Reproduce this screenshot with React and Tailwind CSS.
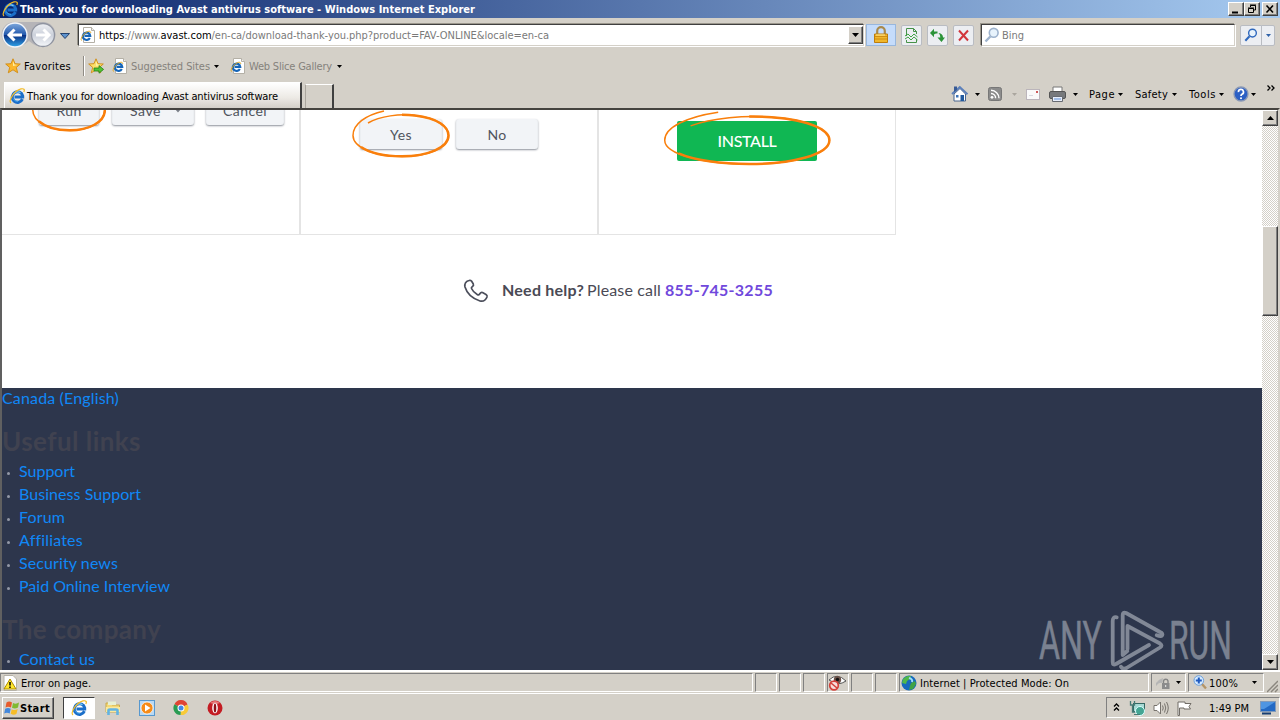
import React, { useLayoutEffect, useRef } from "react";

const UI = "pt-[2px] font-['DejaVu_Sans_Condensed','DejaVu_Sans',sans-serif] text-[11px] leading-[14px]";
const WEB = "font-[Lato,'Open_Sans',sans-serif]";

/* A single-line label whose tracking is spread so that it fills the given width. */
function Label({ w, className = "", children }) {
  const ref = useRef(null);
  useLayoutEffect(() => {
    const el = ref.current;
    el.style.letterSpacing = "0px";
    const natural = el.getBoundingClientRect().width;
    el.style.letterSpacing = (w - natural) / el.textContent.length + "px";
  }, [w]);
  return (
    <span className={"flex shrink-0 " + className} style={{ width: w }}>
      <span ref={ref} className="block shrink-0 whitespace-nowrap">{children}</span>
    </span>
  );
}

function IE({ size = 16, className = "" }) {
  return (
    <svg width={size} height={size} viewBox="0 0 16 16" className={"shrink-0 " + className}>
      <path d="M13.400 11.200A5.300 5.300 0 1 1 13.700 7.800V9H5.500" fill="none" stroke="#1c6fc9" strokeWidth="3" />
      <path d="M4.300 6.300A5 5 0 0 1 11.500 4.800" fill="none" stroke="#7dccf7" strokeWidth="1.100" />
      <path d="M4 10.500Q5.500 13.500 9 13.400" fill="none" stroke="#4aa9ec" strokeWidth="1" />
      <path d="M2 15C-1 12.500 5.500 2.500 12 .9C15.500 .2 15.800 2 14.800 4" fill="none" stroke="#f3bb25" strokeWidth="1.200" />
    </svg>
  );
}

function PageIE({ className = "" }) {
  return (
    <svg width="16" height="16" viewBox="0 0 16 16" className={"shrink-0 " + className}>
      <path d="M3.500 .5H11.500L14.500 3.500V15.500H3.500Z" fill="#fff" stroke="#b4b0a6" />
      <path d="M11.500 .5V3.500H14.500" fill="#eee" stroke="#b4b0a6" />
      <path d="M9.800 11A3.700 3.700 0 1 1 10.200 8.900H4.500" fill="none" stroke="#1766b8" strokeWidth="2.200" />
      <path d="M1.500 13.500C-.2 11.500 4.500 5.300 8.600 4.300C10.300 4 11 5.200 10.600 6" fill="none" stroke="#e5a71b" strokeWidth="1" />
    </svg>
  );
}

function Caret({ className = "fill-black" }) {
  return (
    <svg width="5" height="3" viewBox="0 0 5 3" className={"shrink-0 " + className}>
      <path d="M0 0H5L2.500 3Z" />
    </svg>
  );
}

function Star({ add }) {
  return (
    <svg width="16" height="16" viewBox="0 0 16 16" className="shrink-0">
      <path d="M8 .8L10 5.700L15.300 6L11.300 9.400L12.700 14.800L8 11.800L3.300 14.800L4.700 9.400L.7 6L6 5.700Z" fill={add ? "#fbe06a" : "#fcb72b"} stroke="#cf8a13" strokeWidth=".9" />
      <path d="M8 3L9.300 6.500L12.500 7L8 8Z" fill="#fff1a8" />
      {add && <path d="M6 10H11V7.600L15.600 11.400L11 15.200V13H6Z" fill="#52c234" stroke="#278016" strokeWidth=".8" />}
    </svg>
  );
}

function Magnifier({ color, size = 16, fill = "#e8f3fc" }) {
  return (
    <svg width={size} height={size} viewBox="0 0 16 16" className="shrink-0">
      <path d="M1.500 14.500L6.300 9.500" stroke={color} strokeWidth="2.400" />
      <circle cx="9.700" cy="5.800" r="4.400" fill={fill} stroke={color} strokeWidth="1.600" />
    </svg>
  );
}

const RAISED = "border border-t-white border-l-white border-r-[#404040] border-b-[#404040] bg-[#d4d0c8] shadow-[inset_-1px_-1px_0_#808080]";

function TitleBar() {
  return (
    <div className="flex h-[18px] items-center bg-[linear-gradient(90deg,#0a246a,#a6caf0)] pl-[2px] pr-[2px]">
      <IE className="mr-[2px]" />
      <Label w={455} className={UI + " font-bold text-white"}>Thank you for downloading Avast antivirus software - Windows Internet Explorer</Label>
      <div className="ml-auto flex">
        <div className={"flex h-[14px] w-[16px] items-center justify-center " + RAISED}>
          <svg width="12" height="10"><path d="M2 8.500H8" stroke="#000" strokeWidth="2" /></svg>
        </div>
        <div className={"flex h-[14px] w-[16px] items-center justify-center " + RAISED}>
          <svg width="12" height="10" fill="none" stroke="#000"><path d="M4.500 3V1.500H9.500V6H8M4 1H10M2.500 4.500H7.500V8.500H2.500ZM2 4H8" /></svg>
        </div>
        <div className={"ml-[2px] flex h-[14px] w-[16px] items-center justify-center " + RAISED}>
          <svg width="12" height="10"><path d="M2.500 1.500L9 8.500M9 1.500L2.500 8.500" stroke="#000" strokeWidth="1.600" /></svg>
        </div>
      </div>
    </div>
  );
}

const FIELD = "flex h-[22px] items-center border border-t-[#404040] border-l-[#404040] border-r-[#d4d0c8] border-b-[#d4d0c8] bg-white shadow-[-1px_-1px_0_#9a968c,1px_1px_0_#fff]";
const TOOL = "flex h-[21px] items-center justify-center rounded-[2px] border border-[#b9bcc2] bg-[#eceef2]";

function NavButtons() {
  return (
    <svg width="72" height="28" viewBox="0 0 72 28" className="shrink-0">
      <defs>
        <linearGradient id="navBlue" x2="0" y2="1"><stop stopColor="#7fa9dd" /><stop offset=".48" stopColor="#245aae" /><stop offset=".52" stopColor="#0b3285" /><stop offset="1" stopColor="#2fa3e8" /></linearGradient>
        <linearGradient id="navGrey" x2="0" y2="1"><stop stopColor="#eef0f4" /><stop offset=".5" stopColor="#ccd1db" /><stop offset="1" stopColor="#f5f7fa" /></linearGradient>
      </defs>
      <path d="M14 1H43A12.500 12.500 0 0 1 43 26Q36 26 29 20Q22 26 14 26A12.500 12.500 0 0 1 14 1Z" fill="#b5b4b8" />
      <circle cx="15" cy="14" r="12" fill="url(#navBlue)" stroke="#f2f4f8" strokeWidth="1.400" />
      <circle cx="43" cy="14" r="11.500" fill="url(#navGrey)" stroke="#8f94a0" strokeWidth="1.300" />
      <path d="M22 14H9.500M14.500 8.500L9 14L14.500 19.500" fill="none" stroke="#fff" strokeWidth="3" />
      <path d="M36 14H48.500M43.500 8.500L49 14L43.500 19.500" fill="none" stroke="#fff" strokeWidth="3" />
      <path d="M60.500 12.500H69.500L65 17.500Z" fill="#5d93cf" stroke="#25436e" />
    </svg>
  );
}

function AddressRow() {
  return (
    <div className="flex h-[34px] items-center">
      <NavButtons />
      <div className={FIELD + " ml-[6px] w-[786px] pl-px"}>
        <PageIE />
        <Label w={450} className={UI + " ml-[3px] text-[#7a7a7a]"}>
          <span className="text-black">https</span>://www.<span className="text-black">avast.com</span>/en-ca/download-thank-you.php?product=FAV-ONLINE&amp;locale=en-ca
        </Label>
        <div className={"ml-auto flex h-[18px] w-[15px] items-center justify-center " + RAISED}>
          <svg width="7" height="4"><path d="M0 0H7L3.500 4Z" /></svg>
        </div>
      </div>
      <div className="ml-[2px] flex h-[22px] w-[30px] items-center justify-center border border-[#98b7dd] bg-[#c5dcfb]">
        <svg width="16" height="18" viewBox="0 0 16 18">
          <path d="M4.200 8V5A3.700 3.700 0 0 1 11.800 5V8" fill="none" stroke="#a98a4c" strokeWidth="2.200" />
          <path d="M1.500 8H14.500V16.500H1.500Z" fill="#f0b72b" stroke="#bd7d0c" />
          <path d="M2 10.500H14M2 13H14" stroke="#cf8c12" />
          <path d="M3 9H12" stroke="#ffe893" />
        </svg>
      </div>
      <div className={TOOL + " ml-[5px] w-[21px]"}>
        <svg width="15" height="17" viewBox="0 0 15 17" fill="none" stroke="#469248">
          <path d="M2.500 9V1.500H9.500L12.500 4.500V7M9.500 1.500V4.500H12.500M2.500 13V15.500H12.500V12" />
          <path d="M1 9L4 7L7 10L10 7L13.500 10M1 12L4 10L7 13L10 10L13.500 13" stroke="#3fa345" />
        </svg>
      </div>
      <div className={TOOL + " ml-[5px] w-[21px]"}>
        <svg width="17" height="15" viewBox="0 0 17 15" fill="#2b9338">
          <path d="M1 5L5 .8V3.500H8.500V5.500Q6.500 5 5 6.500V9.200Z" />
          <path d="M8.500 9.500L12.500 14L16 9.500H14Q14 5.500 9.500 5Q11.500 6.500 11.300 9.500Z" />
        </svg>
      </div>
      <div className={TOOL + " ml-[5px] w-[21px]"}>
        <svg width="13" height="13" viewBox="0 0 13 13"><path d="M2 1.500L11 11.500M11 1.500L2 11.500" stroke="#d2353b" strokeWidth="2" /></svg>
      </div>
      <div className={FIELD + " ml-[7px] w-[254px] pl-[2px]"}>
        <Magnifier color="#9eb3cd" />
        <Label w={22} className={UI + " ml-[2px] text-[#7a7a7a]"}>Bing</Label>
      </div>
      <div className={TOOL + " ml-[5px] w-[22px] rounded-r-none"}><Magnifier color="#2f68bd" size={14} /></div>
      <div className={TOOL + " -ml-px w-[14px] rounded-l-none"}><Caret className="fill-[#2f62a8]" /></div>
    </div>
  );
}

function FavoritesRow() {
  return (
    <div className="flex h-[30px] items-center pb-[2px] pl-[5px]">
      <Star />
      <Label w={47} className={UI + " ml-[3px]"}>Favorites</Label>
      <div className="ml-[12px] h-[20px] w-[2px] border-l border-r border-l-[#8f8b84] border-r-white" />
      <div className="ml-[3px] flex"><Star add /></div>
      <div className="ml-[8px] flex"><PageIE /></div>
      <Label w={79} className={UI + " ml-[3px] text-[#85827c]"}>Suggested Sites</Label>
      <div className="ml-[4px] flex"><Caret /></div>
      <div className="ml-[11px] flex"><PageIE /></div>
      <Label w={83} className={UI + " ml-[3px] text-[#85827c]"}>Web Slice Gallery</Label>
      <div className="ml-[5px] flex"><Caret /></div>
    </div>
  );
}

function TabRow() {
  return (
    <div className="flex h-[26px] pl-[4px]">
      <div className="flex w-[298px] items-center border-l border-t border-r-2 border-l-white border-t-white border-r-[#404040] bg-[linear-gradient(180deg,#fff,#ece9e4_60%,#d4d0c8)] pl-[4px]">
        <IE />
        <Label w={251} className={UI + " ml-[2px]"}>Thank you for downloading Avast antivirus software</Label>
      </div>
      <div className="ml-[3px] mt-[2px] w-[29px] border-l border-t border-r-2 border-l-[#aaa69e] border-t-white border-r-[#404040]" />
      <div className="ml-auto flex h-[24px] w-[329px] items-center">
        <svg width="18" height="18" viewBox="0 0 18 18" className="shrink-0">
          <path d="M3 9V16H14.500V9L9 3.500Z" fill="#fff" stroke="#49648d" />
          <path d="M1 9L8.800 2L16.500 9.200" fill="none" stroke="#5c80bb" strokeWidth="2" />
          <path d="M3 1.500H6V5L3 7Z" fill="#385b96" />
          <path d="M9.500 10H13V16H9.500Z" fill="#20599e" /><path d="M5 10H7.500V12.500H5Z" fill="#3c73b7" />
        </svg>
        <div className="ml-[6px] flex"><Caret /></div>
        <svg width="14" height="14" viewBox="0 0 14 14" className="ml-[8px] shrink-0">
          <rect x=".5" y=".5" width="13" height="13" rx="2" fill="#8c8c8c" stroke="#777" />
          <circle cx="4" cy="10.300" r="1.400" fill="#fff" />
          <path d="M3 6.500A4.500 4.500 0 0 1 7.600 11.300M3 3.300A8 8 0 0 1 11 11.300" fill="none" stroke="#fff" strokeWidth="1.400" />
        </svg>
        <div className="ml-[10px] flex"><Caret className="fill-[#aaa69e]" /></div>
        <svg width="14" height="11" viewBox="0 0 14 11" className="ml-[9px] shrink-0">
          <rect x=".5" y=".5" width="13" height="10" fill="#fafafa" stroke="#bbb5bb" />
          <rect x="10" y="2" width="2" height="2" fill="#cf5a5a" /><path d="M3 6.500H7" stroke="#d9d9e0" />
        </svg>
        <svg width="17" height="16" viewBox="0 0 17 16" className="ml-[9px] shrink-0">
          <path d="M4 1H13V7H4Z" fill="#fff" stroke="#777" />
          <rect x=".5" y="5.500" width="16" height="7" rx="1.500" fill="#77797c" stroke="#555" />
          <path d="M3.500 10.500H13.500V15.500H3.500Z" fill="#e8eefa" stroke="#676b72" /><path d="M5 13H12" stroke="#6091d8" />
        </svg>
        <div className="ml-[7px] flex"><Caret /></div>
        <Label w={26} className={UI + " ml-[11px]"}>Page</Label>
        <div className="ml-[3px] flex"><Caret /></div>
        <Label w={33} className={UI + " ml-[12px]"}>Safety</Label>
        <div className="ml-[4px] flex"><Caret /></div>
        <Label w={27} className={UI + " ml-[12px]"}>Tools</Label>
        <div className="ml-[3px] flex"><Caret /></div>
        <svg width="16" height="16" viewBox="0 0 16 16" className="ml-[9px] shrink-0">
          <circle cx="8" cy="8" r="7" fill="#2b5fc4" stroke="#8a98b5" strokeWidth="1.300" />
          <path d="M5.500 6.200A2.500 2.500 0 1 1 8.900 8.200Q8 8.700 8 10" fill="none" stroke="#fff" strokeWidth="1.700" /><circle cx="8" cy="12.200" r="1" fill="#fff" />
        </svg>
        <div className="ml-[2px] flex"><Caret /></div>
        <svg width="8" height="6" viewBox="0 0 8 6" className="mb-[13px] ml-[11px] shrink-0"><path d="M.5 .5L3 3L.5 5.500M4.500 .5L7 3L4.500 5.500" fill="none" stroke="#000" strokeWidth="1.300" /></svg>
      </div>
    </div>
  );
}

const SOFT = "flex items-center justify-center rounded-[3px] border-x border-[#eceff2] bg-[#f2f4f7] shadow-[0_1px_2px_#8d929b] text-[#50555e] " + WEB;

function Scribble({ w, h, className }) {
  return (
    <svg width={w} height={h} viewBox="0 0 98 48" preserveAspectRatio="none" className={"absolute " + className} fill="none" stroke="#f97f0c">
      <path d="M16 13C28 6 48 3.500 63 5.500C86 8 96.500 17 96.500 25.500C96.500 38 75 46.500 50 46.500C24 46.500 1 38 1 25.500C1 14 14 5 32 1" strokeWidth="1.500" vectorEffect="non-scaling-stroke" />
      <path d="M50 4.800Q57 4.800 63 5.500C86 8 96.500 17 96.500 25.500C96.500 38 75 46.300 50 46.300C34 46.300 18 43 9 37" strokeWidth="2.500" vectorEffect="non-scaling-stroke" />
    </svg>
  );
}

function Steps() {
  const card = "h-[125px] w-[298px] border-r border-b border-[#e4e4e4]";
  return (
    <div className="flex">
      <div className={card}>
        <div className="-mt-[15px] flex pl-[37px]">
          <div className="relative">
            <div className={SOFT + " h-[30px] w-[60px]"}><Label w={25} className="text-[14px]">Run</Label></div>
            <Scribble w={74} h={47} className="-left-[7px] -top-[10px]" />
          </div>
          <div className={SOFT + " ml-[13px] h-[30px] w-[82px] pl-[6px]"}>
            <Label w={31} className="text-[14px]">Save</Label>
            <svg width="8" height="6" className="ml-[13px]"><path d="M1 1L4 4.500L7 1" fill="none" stroke="#7b8089" strokeWidth="1.300" /></svg>
          </div>
          <div className={SOFT + " ml-[12px] h-[30px] w-[78px]"}><Label w={44} className="text-[14px]">Cancel</Label></div>
        </div>
      </div>
      <div className={card + " border-l"}>
        <div className="flex pl-[59px] pt-[9px]">
          <div className="relative">
            <div className={SOFT + " h-[30px] w-[82px]"}><Label w={22} className="text-[14px]">Yes</Label></div>
            <Scribble w={98} h={48} className="-left-[8px] -top-[9px]" />
          </div>
          <div className={SOFT + " ml-[14px] h-[30px] w-[82px]"}><Label w={19} className="text-[14px]">No</Label></div>
        </div>
      </div>
      <div className={card + " border-l"}>
        <div className="relative ml-[78px] mt-[11px] w-[140px]">
          <div className={"flex h-[40px] items-center justify-center rounded-[2px] bg-[#10b753] " + WEB}>
            <Label w={59} className="text-[16px] font-medium text-white">INSTALL</Label>
          </div>
          <Scribble w={169} h={55} className="-left-[14px] -top-[10px]" />
        </div>
      </div>
    </div>
  );
}

function SiteLink({ w, children }) {
  return (
    <li className="flex h-[23px] items-center">
      <span className="ml-[5px] mr-[9px] mt-[3px] size-[3px] rounded-full bg-[#9398a6]" />
      <Label w={w} className="pb-[2px] text-[16px] leading-[21px] text-[#1088f7]">{children}</Label>
    </li>
  );
}

function Watermark() {
  return (
    <svg width="194" height="62" viewBox="0 0 194 62" className="absolute bottom-[-1px] right-[30px] opacity-70">
      <g fill="#9ba1ad" stroke="#9ba1ad" strokeWidth=".5" className="font-[Roboto,sans-serif] text-[53px]">
        <text x="1" y="50" textLength="63" lengthAdjust="spacingAndGlyphs">ANY</text>
        <text x="131" y="50" textLength="63" lengthAdjust="spacingAndGlyphs">RUN</text>
      </g>
      <g fill="none" stroke="#a5abb6" strokeWidth="3.800" strokeLinejoin="round" strokeLinecap="round">
        <path d="M78.700 8.300Q74.700 7.500 74.700 12V53Q74.700 57 78 55L111 36" />
        <path d="M118.700 26.300Q123 28 124 26.500Q125.500 24.500 122 23L88 4Q84.700 2.500 84.700 6V46L89.300 42" />
        <path d="M89.500 40V17L122 34.500Q125 36.500 122 38.500L88.500 59Q85 61 83 57.700" />
      </g>
    </svg>
  );
}

function Footer() {
  const heading = "text-[26px] font-bold leading-[30px] text-[#404250]";
  return (
    <div className={"relative h-[282px] overflow-hidden bg-[#2d364c] " + WEB}>
      <Label w={117} className="pb-[2px] text-[16px] leading-[20px] text-[#1088f7]">Canada (English)</Label>
      <div className="mt-[16px] h-[34px]"><Label w={139} className={heading}>Useful links</Label></div>
      <ul>
        <SiteLink w={56}>Support</SiteLink>
        <SiteLink w={122}>Business Support</SiteLink>
        <SiteLink w={46}>Forum</SiteLink>
        <SiteLink w={63}>Affiliates</SiteLink>
        <SiteLink w={99}>Security news</SiteLink>
        <SiteLink w={151}>Paid Online Interview</SiteLink>
      </ul>
      <div className="mt-[16px] h-[34px]"><Label w={159} className={heading}>The company</Label></div>
      <ul><SiteLink w={76}>Contact us</SiteLink></ul>
      <Watermark />
    </div>
  );
}

function Scrollbar() {
  const button = "flex h-[16px] w-[16px] items-center justify-center " + RAISED;
  return (
    <div className="flex w-[16px] flex-col bg-[repeating-conic-gradient(#fff_0_25%,#d4d0c8_0_50%)] bg-[length:2px_2px]">
      <div className={button}><svg width="7" height="4"><path d="M3.500 0L7 4H0Z" /></svg></div>
      <div className={"mt-[100px] h-[90px] " + RAISED} />
      <div className={"mt-auto " + button}><svg width="7" height="4"><path d="M0 0H7L3.500 4Z" /></svg></div>
    </div>
  );
}

function PageView() {
  return (
    <div className="flex h-[562px] border-l-2 border-r-2 border-t-2 border-l-[#606060] border-r-[#d4d0c8] border-t-[#45433f]">
      <div className="w-[1260px] overflow-hidden bg-white">
        <div className="h-[278px]">
          <Steps />
          <div className={"mt-[42px] flex h-[28px] items-center pl-[461px] text-[16px] text-[#4a4a55] " + WEB}>
            <svg width="26" height="26" viewBox="0 0 26 26" fill="none" stroke="#4b4e5b" strokeWidth="1.700" strokeLinejoin="round">
              <path d="M6 2.500Q1 4 2 9Q5 19 17 23Q22 24 24 19Q24.500 17.500 23 16.500L19.500 14.500Q18 14 17 15.500Q16 17.500 14.500 16.700Q10 14 8.500 10.500Q8 9.500 9.500 8.500Q11 7.500 10.300 6L8.500 3Q7.500 2 6 2.500Z" />
            </svg>
            <Label w={82} className="ml-[13px] pb-[2px] font-bold">Need help?</Label>
            <Label w={74} className="ml-[3px] pb-[2px]">Please call</Label>
            <Label w={108} className="ml-[4px] pb-[2px] font-bold text-[#7048dc]">855-745-3255</Label>
          </div>
        </div>
        <Footer />
      </div>
      <Scrollbar />
    </div>
  );
}

const CELL = "flex h-[19px] items-center border border-l-[#808080] border-t-[#808080] border-r-white border-b-white";

function StatusBar() {
  return (
    <div className="flex h-[24px] gap-[2px] border-b border-t-2 border-b-white border-t-white pt-[1px]">
      <div className={CELL + " w-[753px] pl-[2px]"}>
        <svg width="14" height="16" viewBox="0 0 14 16" className="shrink-0">
          <path d="M1 .5H10L13.500 4V15.500H1Z" fill="#fff" stroke="#b6b2a8" />
          <path d="M7 4L13 14H1Z" fill="#ffe72e" stroke="#ad8b00" /><path d="M7 7V10.500M7 11.500V13" stroke="#000" strokeWidth="1.500" />
        </svg>
        <Label w={70} className={UI + " ml-[4px]"}>Error on page.</Label>
      </div>
      <div className={CELL + " w-[22px]"} />
      <div className={CELL + " w-[22px]"} />
      <div className={CELL + " w-[22px]"} />
      <div className={CELL + " w-[22px]"}>
        <svg width="19" height="17" viewBox="0 0 19 17" className="shrink-0">
          <path d="M1 6Q9 -2 18 7Q10 12 5 8Z" fill="#fff" stroke="#555" />
          <circle cx="9.500" cy="5.700" r="3.700" fill="#6b5148" /><circle cx="9.500" cy="5.500" r="1.700" fill="#111" />
          <circle cx="6" cy="11.500" r="4.300" fill="#f7dedc" stroke="#d4413a" strokeWidth="1.700" /><path d="M3 9L9 14" stroke="#d4413a" strokeWidth="1.600" />
        </svg>
      </div>
      <div className={CELL + " w-[22px]"} />
      <div className={CELL + " w-[22px]"} />
      <div className={CELL + " w-[250px] pl-[1px]"}>
        <svg width="16" height="16" viewBox="0 0 16 16" className="shrink-0">
          <circle cx="8" cy="8" r="7.500" fill="#1769bd" />
          <path d="M2 4Q6 0 10 1L9 4L6 6L5 9L1 8Z" fill="#51b848" /><path d="M10 8L14 6L15 9L12 14L8 15L9 11Z" fill="#3fa345" /><path d="M8 3Q12 4 11 7" stroke="#9ee0f7" fill="none" strokeWidth="2" />
        </svg>
        <Label w={149} className={UI + " ml-[3px]"}>Internet | Protected Mode: On</Label>
      </div>
      <div className={CELL + " w-[35px] pl-[3px]"}>
        <svg width="16" height="15" viewBox="0 0 16 15" className="shrink-0"><path d="M1 8Q4 4 8 3L7 8Q4 7 1 11Z" fill="#b5b5b5" /><path d="M8.500 8V6A2.300 2.300 0 0 1 13 6V8" fill="none" stroke="#858585" strokeWidth="1.400" /><path d="M7 8H14.500V14H7Z" fill="#8c8c8c" /><path d="M10.700 10V12" stroke="#eee" /></svg>
        <div className="ml-[5px] flex"><Caret /></div>
      </div>
      <div className={CELL + " w-[76px] border-r-transparent pl-[4px]"}>
        <svg width="14" height="15" viewBox="0 0 14 15" className="shrink-0"><path d="M8.500 8.500L13 13.500" stroke="#b49567" strokeWidth="2.400" /><circle cx="5.800" cy="5.500" r="4.800" fill="#d6ebff" stroke="#6d9fdb" /><path d="M5.800 2.500V8.500M2.800 5.500H8.800" stroke="#205bc0" strokeWidth="2" /></svg>
        <Label w={29} className={UI + " ml-[2px]"}>100%</Label>
        <div className="ml-[14px] flex"><Caret /></div>
      </div>
      <svg width="11" height="13" className="ml-[1px] mt-auto shrink-0" stroke="#8b877f"><path d="M0 12L11 1M4 12L11 5M8 12L11 9" strokeWidth="1.500" /></svg>
    </div>
  );
}

function Taskbar() {
  return (
    <div className="flex h-[24px] items-center pb-px pl-[2px]">
      <div className={"flex h-[22px] w-[52px] items-center pl-px " + RAISED}>
        <svg width="16" height="16" viewBox="0 0 16 16" className="shrink-0">
          <path d="M2.500 2.500Q5 .5 8 2.500L7 7.500Q4 6 1.500 7.500Z" fill="#e75b2b" /><path d="M9 3Q12 4.500 15 2.500L14 7.500Q11 9.500 8 7.800Z" fill="#80ba32" />
          <path d="M1.200 8.800Q4 7 6.700 8.800L5.700 13.500Q3 12 .2 13.500Z" fill="#4388dc" /><path d="M7.700 9.200Q10.500 11 13.700 9L12.500 13.800Q10 15.500 6.700 13.800Z" fill="#f7bd28" />
        </svg>
        <Label w={30} className={UI + " font-bold"}>Start</Label>
      </div>
      <div className="ml-[9px] flex h-[22px] w-[32px] items-center justify-center border border-b-white border-l-[#404040] border-r-white border-t-[#404040] bg-white"><IE /></div>
      <svg width="16" height="16" viewBox="0 0 16 16" className="ml-[10px] shrink-0">
        <path d="M1 3H6L7 5H14.500V12H1Z" fill="#f4d875" stroke="#c9aa4f" /><path d="M3 1.500H11V5H3Z" fill="#e7f0d3" /><path d="M1 7H15V12H1Z" fill="#fae99c" />
        <path d="M3.500 15V10.500Q3.500 9.500 5 9.500H11Q12.500 9.500 12.500 10.500V15" fill="none" stroke="#62b3e2" strokeWidth="2.600" />
      </svg>
      <svg width="16" height="16" viewBox="0 0 16 16" className="ml-[18px] shrink-0">
        <rect x=".5" y=".5" width="15" height="15" fill="#b9d9f4" stroke="#5798cf" /><circle cx="8" cy="8" r="6" fill="#f68b18" stroke="#fff" strokeWidth=".7" /><path d="M6 4.500L11.500 8L6 11.500Z" fill="#fff" />
      </svg>
      <svg width="16" height="16" viewBox="0 0 16 16" className="ml-[18px] shrink-0">
        <path d="M8 8L1.500 4.300A7 7 0 0 1 14.500 4.500Z" fill="#df4434" /><path d="M8 8L14.500 4.500A7 7 0 0 1 7.500 15Z" fill="#f8ca37" /><path d="M8 8L7.500 15A7 7 0 0 1 1.500 4.300Z" fill="#299b52" />
        <circle cx="8" cy="8" r="3.500" fill="#fff" /><circle cx="8" cy="8" r="2.500" fill="#4388e8" />
      </svg>
      <svg width="16" height="16" viewBox="0 0 16 16" className="ml-[18px] shrink-0">
        <circle cx="8" cy="8" r="7.500" fill="#c41c23" /><path d="M3 3Q8 -1 13 3Q8 5 3 3Z" fill="#e87b7b" /><ellipse cx="8" cy="8" rx="2.800" ry="5.300" fill="#fff" /><ellipse cx="8" cy="8" rx="1.300" ry="4.600" fill="#8d1118" />
      </svg>
      <div className={CELL + " ml-auto h-[21px] w-[174px] pl-[6px]"}>
        <svg width="7" height="9" viewBox="0 0 7 9" className="shrink-0" fill="none" stroke="#000" strokeWidth="1.300"><path d="M1 3.500L3.500 1L6 3.500M1 7.500L3.500 5L6 7.500" /></svg>
        <svg width="17" height="16" viewBox="0 0 17 16" className="ml-[9px] shrink-0">
          <rect x="4.500" y="3.500" width="11" height="8" fill="#a7d9d4" stroke="#356864" /><path d="M1.500 1V5H5.500V1M3.500 5V12H7" fill="none" stroke="#477a75" strokeWidth="1.300" /><circle cx="11" cy="11" r="4.500" fill="#45a593" stroke="#dff" /><path d="M5 14.500H11" stroke="#477a75" />
        </svg>
        <svg width="17" height="14" viewBox="0 0 17 14" className="ml-[7px] shrink-0" fill="none" stroke="#77736d"><path d="M1 4.500H4L7.500 1V13L4 9.500H1Z" fill="#fff" /><path d="M9.500 4.500Q11 7 9.500 9.500M11.500 2.500Q14 7 11.500 11.500M13.500 1Q17 7 13.500 13" /></svg>
        <svg width="17" height="16" viewBox="0 0 17 16" className="ml-[6px] shrink-0" fill="#fff" stroke="#716d67"><path d="M2 15.500V2H9V3.500H15L13 6.500L14.500 9H8V8H3.500V15.500Z" /></svg>
        <Label w={40} className={UI + " ml-[16px]"}>1:49 PM</Label>
        <svg width="16" height="14" viewBox="0 0 16 14" className="ml-[11px] shrink-0"><rect x=".5" y=".5" width="15" height="10" fill="#2369c4" stroke="#829ab9" /><path d="M1 1H15L4 8H1Z" fill="#4f95e2" /><path d="M2 12.500H11" stroke="#173e72" strokeWidth="2" /></svg>
      </div>
    </div>
  );
}

export default function App() {
  return (
    <div className="flex h-[720px] w-[1280px] flex-col overflow-hidden bg-[#d4d0c8] text-black">
      <TitleBar />
      <AddressRow />
      <FavoritesRow />
      <TabRow />
      <PageView />
      <StatusBar />
      <div className="h-[2px]" />
      <Taskbar />
    </div>
  );
}
